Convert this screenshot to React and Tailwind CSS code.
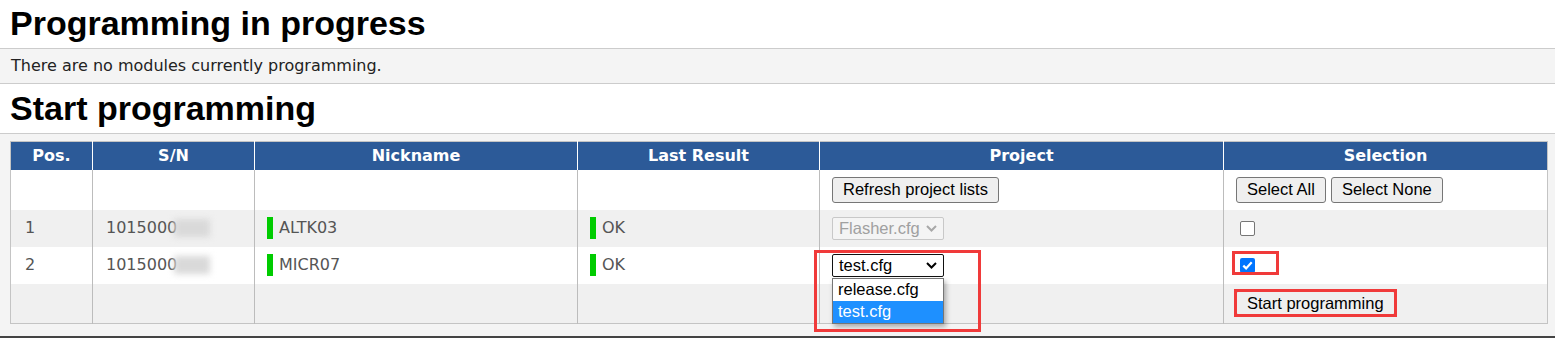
const rows = [
  { pos: 1, sn: "1015000", nick: "ALTK03", result: "OK", project: "Flasher.cfg", disabled: true, checked: false },
  { pos: 2, sn: "1015000", nick: "MICR07", result: "OK", project: "test.cfg", disabled: false, checked: true },
];

const verdana = "font-['DejaVu_Sans',Verdana,sans-serif]";
const arial = "font-['Liberation_Sans',Arial,sans-serif]";

function Chevron({ color = "#000" }) {
  return (
    <svg width="11" height="7" viewBox="0 0 11 7" fill="none">
      <path d="M1 1l4.5 4.5L10 1" stroke={color} strokeWidth="2" />
    </svg>
  );
}

function WinButton({ children }) {
  return (
    <button
      className={`${arial} h-[26px] px-[10px] text-[16.5px] leading-none text-black bg-[#efefef] border border-[#767676] rounded-[3px]`}
    >
      {children}
    </button>
  );
}

function Checkbox({ checked }) {
  if (checked) {
    return (
      <span className="inline-flex w-[15px] h-[15px] rounded-[2px] bg-[#0075ff] items-center justify-center">
        <svg width="11" height="9" viewBox="0 0 11 9" fill="none">
          <path d="M1.3 4.6l2.8 2.8L9.7 1.3" stroke="#fff" strokeWidth="2.2" />
        </svg>
      </span>
    );
  }
  return <span className="inline-block w-[15px] h-[15px] rounded-[2px] border border-[#767676] bg-white" />;
}

function ProjectSelect({ value, disabled, open }) {
  return (
    <div className="relative w-[112px]">
      <div
        className={`${arial} h-[23px] flex items-center justify-between pl-[6px] pr-[6px] text-[16.5px] rounded-[2px] border ${
          disabled ? "border-[#c8c8c8] text-[#a0a0a0] bg-[#f4f4f4]" : "border-[#111] text-black bg-white"
        }`}
      >
        <span>{value}</span>
        <Chevron color={disabled ? "#a8a8a8" : "#000"} />
      </div>
      {open && (
        <div className={`${arial} absolute left-0 top-[24px] w-[112px] bg-white border border-[#767676] shadow-[2px_3px_5px_rgba(0,0,0,0.3)] text-[16.5px] z-10`}>
          <div className="h-[22px] pl-[5px] flex items-center text-black">release.cfg</div>
          <div className="h-[22px] pl-[5px] flex items-center text-white bg-[#1e90ff]">test.cfg</div>
        </div>
      )}
    </div>
  );
}

function Bar() {
  return <span className="inline-block w-[6px] h-[22px] bg-[#00cc00] mr-[6px]" />;
}

export default function App() {
  const th = `${verdana} h-[28px] text-[16px] font-bold text-white text-center border-l border-white first:border-l-0`;
  const td = "px-[12px] border-l border-[#bcbcbc] first:border-l-0";

  return (
    <div className="w-[1555px] bg-white">
      <h1 className={`${arial} h-[48px] pt-[4px] px-[10px] text-[34px] leading-[39px] font-bold text-black`}>
        Programming in progress
      </h1>
      <div className={`${verdana} h-[36px] flex items-center px-[11px] border-y border-[#cccccc] bg-[#f4f4f4] text-[16px] text-[#222]`}>
        There are no modules currently programming.
      </div>
      <h2 className={`${arial} h-[49px] pt-[5px] px-[10px] text-[34px] leading-[39px] font-bold text-black`}>
        Start programming
      </h2>

      <div className="border-t border-[#cccccc] border-b-2 border-b-[#444] bg-[#f4f4f4] pt-[7px] pb-[12px]">
        <table className={`${verdana} ml-[10px] w-[1538px] table-fixed border-collapse border border-[#c4c4c4] text-[16px] text-[#555]`}>
          <colgroup>
            <col className="w-[82px]" />
            <col className="w-[162px]" />
            <col className="w-[323px]" />
            <col className="w-[242px]" />
            <col className="w-[404px]" />
            <col />
          </colgroup>
          <thead>
            <tr className="bg-[#2c5a98]">
              <th className={th}>Pos.</th>
              <th className={th}>S/N</th>
              <th className={th}>Nickname</th>
              <th className={th}>Last Result</th>
              <th className={th}>Project</th>
              <th className={th}>Selection</th>
            </tr>
          </thead>
          <tbody>
            <tr className="h-[40px] bg-white">
              <td className={td} />
              <td className={td} />
              <td className={td} />
              <td className={td} />
              <td className={td}>
                <WinButton>Refresh project lists</WinButton>
              </td>
              <td className={td}>
                <div className="flex gap-[5px]">
                  <WinButton>Select All</WinButton>
                  <WinButton>Select None</WinButton>
                </div>
              </td>
            </tr>
            {rows.map((r, i) => (
              <tr key={r.pos} className={`h-[37px] ${i % 2 === 0 ? "bg-[#f0f0f0]" : "bg-white"}`}>
                <td className="px-[14px]">{r.pos}</td>
                <td className={`${td} pl-[13px]`}>
                  <div className="flex items-center">
                    <span>{r.sn}</span>
                    {/* redacted part of the serial */}
                    <span className="inline-block w-[36px] h-[18px] -ml-[3px] bg-[#d9d9d9] blur-[3px]" />
                  </div>
                </td>
                <td className={td}>
                  <div className="flex items-center">
                    <Bar />
                    {r.nick}
                  </div>
                </td>
                <td className={td}>
                  <div className="flex items-center">
                    <Bar />
                    {r.result}
                  </div>
                </td>
                <td className={`${td} relative`}>
                  <ProjectSelect value={r.project} disabled={r.disabled} open={!r.disabled} />
                  {!r.disabled && (
                    <div className="absolute left-[-6px] top-[3px] w-[167px] h-[82px] border-[3px] border-[#f03a3a] z-20 pointer-events-none" />
                  )}
                </td>
                <td className={`${td} relative`}>
                  <div className="flex items-center pl-[4px]">
                    <Checkbox checked={r.checked} />
                  </div>
                  {r.checked && (
                    <div className="absolute left-[8px] top-[4px] w-[47px] h-[24px] border-[3px] border-[#f03a3a] pointer-events-none" />
                  )}
                </td>
              </tr>
            ))}
            <tr className="h-[40px] bg-[#f0f0f0]">
              <td className={td} />
              <td className={td} />
              <td className={td} />
              <td className={td} />
              <td className={td} />
              <td className={`${td} relative`}>
                <WinButton>Start programming</WinButton>
                <div className="absolute left-[10px] top-[5px] w-[163px] h-[28px] border-[3px] border-[#f03a3a] pointer-events-none" />
              </td>
            </tr>
          </tbody>
        </table>
      </div>
    </div>
  );
}
